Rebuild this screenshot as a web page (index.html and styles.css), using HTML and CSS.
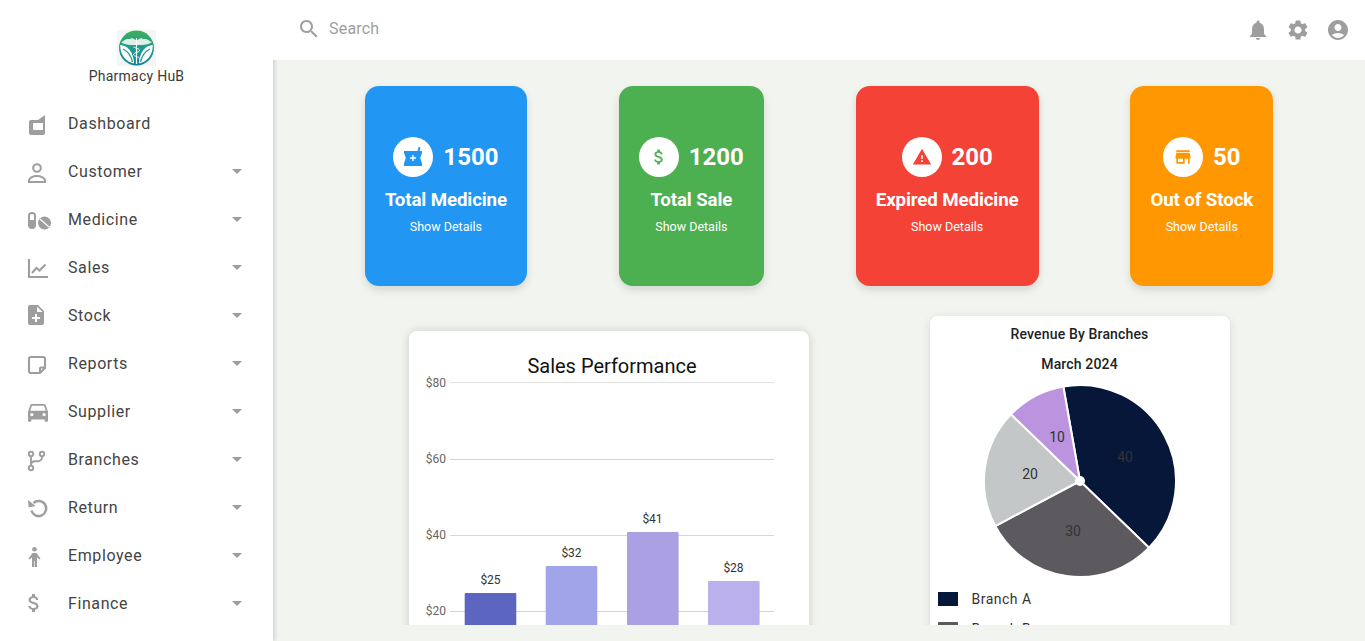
FILE: index.html
```html
<!DOCTYPE html>
<html lang="en">
<head>
<meta charset="utf-8">
<title>Pharmacy HuB</title>
<link rel="stylesheet" href="styles.css">
</head>
<body>
<aside class="sidebar">
  <div class="brand">
    <svg class="logo" viewBox="0 0 39 36">
      <defs>
        <linearGradient id="lg" x1="0" y1="0" x2="0" y2="1">
          <stop offset="0" stop-color="#3fae5a"/>
          <stop offset=".45" stop-color="#1f9f8c"/>
          <stop offset="1" stop-color="#0f7f9a"/>
        </linearGradient>
      </defs>
      <rect width="39" height="36" fill="#f3f6f5"/>
      <circle cx="19.500" cy="18" r="17.500" fill="url(#lg)"/>
      <path d="M4 12c3-.5 4-3.500 7-3 2 .3 3-1.500 5-.5l3.500 2 3.500-2c2-1 3 .8 5 .5 3-.5 4 2.500 7 3-3 2.500-7 3-15.500 3S7 14.500 4 12z" fill="#dff0ea"/>
      <path d="M3.200 15c7 .5 13 6 14 18.500C9 32 3 25 3.200 15z" fill="#fff"/>
      <path d="M35.800 15c-7 .5-13 6-14 18.500C30 32 36 25 35.800 15z" fill="#fff"/>
      <path d="M6 19c4 2 8 6 9.500 13M33 19c-4 2-8 6-9.500 13" fill="none" stroke="#1f9f8c" stroke-width="1.300"/>
      <path d="M19.500 8v26" stroke="#fff" stroke-width="1.200"/>
      <path d="M16.500 17c3 1.500 6 1.500 6 3.500s-6 2-6 4 6 2 6 4" fill="none" stroke="#fff" stroke-width="1"/>
    </svg>
    <div class="brand-name">Pharmacy HuB</div>
  </div>
  <ul class="nav">
    <li class="nav-item">
      <svg class="nav-icon" viewBox="0 0 24 24"><path fill-rule="evenodd" d="M7 9h7l7-5v18a2 2 0 0 1-2 2H7a2 2 0 0 1-2-2V11a2 2 0 0 1 2-2zm3 3a1 1 0 0 0-1 1v5a1 1 0 0 0 1 1h9v-7z"/></svg>
      <span class="nav-label">Dashboard</span>
    </li>
    <li class="nav-item">
      <svg class="nav-icon" viewBox="0 0 24 24"><circle class="line" cx="13" cy="9" r="3.800"/><path class="line" d="M5 23v-1.500C5 19 9 17 13 17s8 2 8 4.500V23z"/></svg>
      <span class="nav-label">Customer</span>
      <svg class="caret" viewBox="0 0 24 24"><path d="M7 10l5 5 5-5z"/></svg>
    </li>
    <li class="nav-item">
      <svg class="nav-icon" viewBox="0 0 24 24"><path fill-rule="evenodd" d="M8 5a4 4 0 0 1 4 4v9a4 4 0 0 1-8 0V9a4 4 0 0 1 4-4zm0 2a2 2 0 0 0-2 2v4h4V9a2 2 0 0 0-2-2z"/><circle cx="20.500" cy="16" r="6.500"/><path class="cut" d="M16 12l9 8"/></svg>
      <span class="nav-label">Medicine</span>
      <svg class="caret" viewBox="0 0 24 24"><path d="M7 10l5 5 5-5z"/></svg>
    </li>
    <li class="nav-item">
      <svg class="nav-icon" viewBox="0 0 24 24"><path class="line" d="M5 4v18h19"/><path class="line" d="M8 18l4.500-5 3 2.500 6-6"/></svg>
      <span class="nav-label">Sales</span>
      <svg class="caret" viewBox="0 0 24 24"><path d="M7 10l5 5 5-5z"/></svg>
    </li>
    <li class="nav-item">
      <svg class="nav-icon" viewBox="0 0 24 24"><path d="M14 2H6c-1.100 0-1.990.9-1.990 2L4 20c0 1.100.89 2 1.990 2H18c1.100 0 2-.9 2-2V8l-6-6zm2 14h-3v3h-2v-3H8v-2h3v-3h2v3h3v2zm-3-7V3.500L18.500 9H13z"/></svg>
      <span class="nav-label">Stock</span>
      <svg class="caret" viewBox="0 0 24 24"><path d="M7 10l5 5 5-5z"/></svg>
    </li>
    <li class="nav-item">
      <svg class="nav-icon" viewBox="0 0 24 24"><path class="line" d="M7 6h12a2 2 0 0 1 2 2v9l-5 5H7a2 2 0 0 1-2-2V8a2 2 0 0 1 2-2z"/><path class="line" d="M21 16.500h-4a1 1 0 0 0-1 1V22"/></svg>
      <span class="nav-label">Reports</span>
      <svg class="caret" viewBox="0 0 24 24"><path d="M7 10l5 5 5-5z"/></svg>
    </li>
    <li class="nav-item">
      <svg class="nav-icon" viewBox="0 0 24 24"><path transform="translate(4 5) scale(1.110) translate(-3 -5)" d="M18.920 6.010C18.720 5.420 18.160 5 17.500 5h-11c-.66 0-1.210.42-1.420 1.010L3 12v8c0 .55.45 1 1 1h1c.55 0 1-.45 1-1v-1h12v1c0 .55.45 1 1 1h1c.55 0 1-.45 1-1v-8l-2.080-5.990zM6.500 16c-.83 0-1.500-.67-1.500-1.500S5.670 13 6.500 13s1.500.67 1.500 1.500S7.330 16 6.500 16zm11 0c-.83 0-1.500-.67-1.500-1.500s.67-1.500 1.500-1.500 1.500.67 1.500 1.500-.67 1.500-1.500 1.500zM5 11l1.500-4.500h11L19 11H5z"/></svg>
      <span class="nav-label">Supplier</span>
      <svg class="caret" viewBox="0 0 24 24"><path d="M7 10l5 5 5-5z"/></svg>
    </li>
    <li class="nav-item">
      <svg class="nav-icon" viewBox="0 0 24 24"><circle class="thin" cx="7" cy="7" r="2.200"/><circle class="thin" cx="18" cy="7" r="2.200"/><circle class="thin" cx="7" cy="21" r="2.200"/><path class="thin" d="M7 9.200v9.600M18 9.200v1a4 4 0 0 1-4 4h-3a4 4 0 0 0-4 3.500"/></svg>
      <span class="nav-label">Branches</span>
      <svg class="caret" viewBox="0 0 24 24"><path d="M7 10l5 5 5-5z"/></svg>
    </li>
    <li class="nav-item">
      <svg class="nav-icon" viewBox="0 0 24 24"><path class="line thick" d="M9.500 8A7.500 7.500 0 1 1 7.400 15.500"/><path d="M4 5l.6 7.500 7-1.500z"/></svg>
      <span class="nav-label">Return</span>
      <svg class="caret" viewBox="0 0 24 24"><path d="M7 10l5 5 5-5z"/></svg>
    </li>
    <li class="nav-item">
      <svg class="nav-icon" viewBox="0 0 24 24"><circle cx="10.500" cy="6.300" r="2.300"/><path d="M8.500 10h4l4 5.500-1 1-2.500-2V24h-2.200v-6h-.6v6H8v-9.500l-2.500 2-1-1z"/></svg>
      <span class="nav-label">Employee</span>
      <svg class="caret" viewBox="0 0 24 24"><path d="M7 10l5 5 5-5z"/></svg>
    </li>
    <li class="nav-item">
      <svg class="nav-icon" viewBox="2 0 24 24"><path d="M11.800 10.900c-2.270-.59-3-1.200-3-2.150 0-1.090 1.010-1.850 2.700-1.850 1.780 0 2.440.85 2.500 2.100h2.210c-.07-1.720-1.120-3.300-3.210-3.810V3h-3v2.160c-1.940.42-3.500 1.680-3.500 3.610 0 2.310 1.910 3.460 4.700 4.130 2.500.6 3 1.480 3 2.410 0 .69-.49 1.790-2.700 1.790-2.060 0-2.870-.92-2.980-2.100h-2.200c.12 2.190 1.760 3.420 3.680 3.830V21h3v-2.150c1.950-.37 3.500-1.500 3.500-3.550 0-2.840-2.430-3.810-4.700-4.400z"/></svg>
      <span class="nav-label">Finance</span>
      <svg class="caret" viewBox="0 0 24 24"><path d="M7 10l5 5 5-5z"/></svg>
    </li>
  </ul>
</aside>

<div class="column">
  <header class="topbar">
    <svg class="top-icon search-icon" viewBox="0 0 24 24"><path d="M15.500 14h-.79l-.28-.27C15.410 12.590 16 11.110 16 9.500 16 5.910 13.090 3 9.500 3S3 5.910 3 9.500 5.910 16 9.500 16c1.610 0 3.090-.59 4.230-1.570l.27.28v.79l5 4.990L20.490 19l-4.990-5zm-6 0C7.010 14 5 11.990 5 9.500S7.010 5 9.500 5 14 7.010 14 9.500 11.990 14 9.500 14z"/></svg>
    <span class="search-text">Search</span>
    <div class="top-actions">
      <svg class="top-icon" viewBox="0 0 24 24"><path d="M12 22c1.100 0 2-.9 2-2h-4c0 1.100.89 2 2 2zm6-6v-5c0-3.070-1.640-5.640-4.500-6.320V4c0-.83-.67-1.500-1.500-1.500s-1.500.67-1.500 1.500v.68C7.630 5.360 6 7.920 6 11v5l-2 2v1h16v-1l-2-2z"/></svg>
      <svg class="top-icon" viewBox="0 0 24 24"><path d="M19.140 12.940c.04-.3.06-.61.06-.94 0-.32-.02-.64-.07-.94l2.030-1.580c.18-.14.23-.41.12-.61l-1.920-3.320c-.12-.22-.37-.29-.59-.22l-2.390.96c-.5-.38-1.030-.7-1.620-.94l-.36-2.540c-.04-.24-.24-.41-.48-.41h-3.840c-.24 0-.43.17-.47.41l-.36 2.540c-.59.24-1.130.57-1.620.94l-2.390-.96c-.22-.08-.47 0-.59.22L2.740 8.870c-.12.21-.08.47.12.61l2.030 1.580c-.05.3-.09.63-.09.94s.02.64.07.94l-2.030 1.580c-.18.14-.23.41-.12.61l1.920 3.320c.12.22.37.29.59.22l2.390-.96c.5.38 1.030.7 1.620.94l.36 2.540c.05.24.24.41.48.41h3.840c.24 0 .44-.17.47-.41l.36-2.540c.59-.24 1.130-.56 1.620-.94l2.390.96c.22.08.47 0 .59-.22l1.920-3.320c.12-.22.07-.47-.12-.61l-2.010-1.580zM12 15.600c-1.980 0-3.600-1.620-3.600-3.600s1.620-3.600 3.600-3.600 3.600 1.620 3.600 3.600-1.620 3.600-3.600 3.600z"/></svg>
      <svg class="top-icon" viewBox="0 0 24 24"><path d="M12 2C6.480 2 2 6.480 2 12s4.480 10 10 10 10-4.480 10-10S17.520 2 12 2zm0 4c1.930 0 3.500 1.570 3.500 3.500S13.930 13 12 13s-3.500-1.570-3.500-3.500S10.070 6 12 6zm0 14c-2.030 0-4.430-.82-6.140-2.880C7.550 15.800 9.680 15 12 15s4.450.8 6.140 2.120C16.430 19.180 14.030 20 12 20z"/></svg>
    </div>
  </header>

  <main class="main">
    <section class="stats">
      <article class="stat stat-blue">
        <div class="stat-head">
          <span class="stat-badge"><svg class="badge-icon" viewBox="0 0 24 24"><path fill-rule="evenodd" d="M21 6h-2.500l1-3.600-1.900-.6L16.500 6H3v2l1.800 5L3 18.500V21h18v-2.500L19.200 13 21 8zM15 13.700h-2.300V16h-1.400v-2.300H9v-1.400h2.300V10h1.400v2.300H15z"/></svg></span>
          <span class="stat-num">1500</span>
        </div>
        <h3 class="stat-title">Total Medicine</h3>
        <div class="stat-link">Show Details</div>
      </article>
      <article class="stat stat-green">
        <div class="stat-head">
          <span class="stat-badge"><svg class="badge-icon small" viewBox="0 0 24 24"><path d="M11.800 10.900c-2.270-.59-3-1.200-3-2.150 0-1.090 1.010-1.850 2.700-1.850 1.780 0 2.440.85 2.500 2.100h2.210c-.07-1.720-1.120-3.300-3.210-3.810V3h-3v2.160c-1.940.42-3.500 1.680-3.500 3.610 0 2.310 1.910 3.460 4.700 4.130 2.500.6 3 1.480 3 2.410 0 .69-.49 1.790-2.700 1.790-2.060 0-2.870-.92-2.980-2.100h-2.200c.12 2.190 1.760 3.420 3.680 3.830V21h3v-2.150c1.950-.37 3.500-1.500 3.500-3.550 0-2.840-2.430-3.810-4.700-4.400z"/></svg></span>
          <span class="stat-num">1200</span>
        </div>
        <h3 class="stat-title">Total Sale</h3>
        <div class="stat-link">Show Details</div>
      </article>
      <article class="stat stat-red">
        <div class="stat-head">
          <span class="stat-badge"><svg class="badge-icon small" viewBox="0 0 24 24"><path d="M1 21h22L12 2 1 21zm12-3h-2v-2h2v2zm0-4h-2v-4h2v4z"/></svg></span>
          <span class="stat-num">200</span>
        </div>
        <h3 class="stat-title">Expired Medicine</h3>
        <div class="stat-link">Show Details</div>
      </article>
      <article class="stat stat-orange">
        <div class="stat-head">
          <span class="stat-badge"><svg class="badge-icon small" viewBox="0 0 24 24"><path d="M20 4H4v2h16V4zm1 10v-2l-1-5H4l-1 5v2h1v6h10v-6h4v6h2v-6h1zm-9 4H6v-4h6v4z"/></svg></span>
          <span class="stat-num">50</span>
        </div>
        <h3 class="stat-title">Out of Stock</h3>
        <div class="stat-link">Show Details</div>
      </article>
    </section>

    <section class="charts">
      <article class="chart-card sales-card">
        <svg class="sales-chart" viewBox="0 0 400 400">
          <text class="chart-title" x="203" y="42">Sales Performance</text>
          <line class="grid grid-top" x1="41" x2="365" y1="51.500" y2="51.500"/>
          <line class="grid" x1="41" x2="365" y1="128.500" y2="128.500"/>
          <line class="grid" x1="41" x2="365" y1="204.500" y2="204.500"/>
          <line class="grid" x1="41" x2="365" y1="280.500" y2="280.500"/>
          <text class="axis" x="37" y="56">$80</text>
          <text class="axis" x="37" y="132">$60</text>
          <text class="axis" x="37" y="208">$40</text>
          <text class="axis" x="37" y="284">$20</text>
          <rect class="bar-a" x="55.700" y="262" width="51.600" height="138" rx="1"/>
          <rect class="bar-b" x="136.700" y="235" width="51.600" height="165" rx="1"/>
          <rect class="bar-c" x="218" y="201" width="51.600" height="199" rx="1"/>
          <rect class="bar-d" x="299" y="250" width="51.600" height="150" rx="1"/>
          <text class="value" x="81.500" y="253">$25</text>
          <text class="value" x="162.500" y="226">$32</text>
          <text class="value" x="243.500" y="192">$41</text>
          <text class="value" x="324.500" y="241">$28</text>
        </svg>
      </article>

      <article class="chart-card pie-card">
        <div class="pie-title">Revenue By Branches</div>
        <div class="pie-title pie-sub">March 2024</div>
        <svg class="pie" viewBox="0 0 300 200">
          <path class="slice slice-a" d="M150 100L133.330 5.460A96 96 0 0 1 219.050 166.690Z"/>
          <path class="slice slice-b" d="M150 100L219.050 166.690A96 96 0 0 1 65.240 145.070Z"/>
          <path class="slice slice-c" d="M150 100L65.240 145.070A96 96 0 0 1 80.950 33.310Z"/>
          <path class="slice slice-d" d="M150 100L80.950 33.310A96 96 0 0 1 133.330 5.460Z"/>
          <circle class="hub" cx="150" cy="100" r="5"/>
          <text class="pie-label" x="195" y="81">40</text>
          <text class="pie-label" x="143" y="155">30</text>
          <text class="pie-label" x="100" y="98">20</text>
          <text class="pie-label" x="127" y="61">10</text>
        </svg>
        <ul class="legend">
          <li class="legend-row"><span class="swatch swatch-a"></span>Branch A</li>
          <li class="legend-row"><span class="swatch swatch-b"></span>Branch B</li>
        </ul>
      </article>
    </section>
  </main>
</div>
</body>
</html>
```

FILE: styles.css
```css
* { box-sizing: border-box; }

html, body { height: 100%; }

body {
  margin: 0;
  display: flex;
  height: 641px;
  overflow: hidden;
  background: #f2f4f0;
  font-family: Roboto, "Liberation Sans", sans-serif;
  color: #333;
}

/* Sidebar */
.sidebar {
  flex: 0 0 273px;
  height: 641px;
  background: #fff;
  box-shadow: 2px 0 4px rgba(0, 0, 0, .14);
  z-index: 1;
  overflow: hidden;
}

.brand {
  display: flex;
  flex-direction: column;
  align-items: center;
  padding-top: 30px;
  height: 99px;
}

.logo { width: 39px; height: 36px; display: block; }

.brand-name {
  font-size: 14px;
  line-height: 20px;
  letter-spacing: .25px;
  color: #3a3a3a;
}

.nav { list-style: none; margin: 0; padding: 0; }

.nav-item {
  display: flex;
  align-items: center;
  height: 48px;
  padding: 0 24px;
}

.nav-icon {
  flex: 0 0 24px;
  width: 24px;
  height: 24px;
  fill: #9e9e9e;
  overflow: visible;
}

.nav-icon .line,
.nav-icon .thin {
  fill: none;
  stroke: #9e9e9e;
  stroke-width: 2.1;
}

.nav-icon .thin { stroke-width: 1.9; }

.nav-icon .thick { stroke-width: 2.5; }

.nav-icon .cut { fill: none; stroke: #fff; stroke-width: 1.2; }

.nav-label {
  flex: 1;
  margin-left: 20px;
  font-size: 16px;
  letter-spacing: .6px;
  color: #444;
}

.caret { width: 24px; height: 24px; fill: #9e9e9e; }

/* Top bar */
.column {
  flex: 1;
  min-width: 0;
  display: flex;
  flex-direction: column;
  height: 641px;
  padding-bottom: 16px;
}

.topbar {
  position: relative;
  z-index: 2;
  flex: 0 0 60px;
  display: flex;
  align-items: center;
  background: #fff;
  padding: 0 15px 0 24px;
}

.top-icon { width: 24px; height: 24px; fill: #9e9e9e; display: block; }

.search-icon { margin-top: -2px; }

.search-text {
  margin-left: 8px;
  margin-top: -4px;
  font-size: 16px;
  letter-spacing: .2px;
  color: #9e9e9e;
}

.top-actions { margin-left: auto; display: flex; gap: 16px; }

/* Main */
.main {
  flex: 1;
  min-height: 0;
  overflow: hidden;
  padding-top: 26px;
}

.stats {
  display: flex;
  justify-content: space-evenly;
}

.stat {
  height: 200px;
  padding: 0 20px;
  border-radius: 14px;
  color: #fff;
  display: flex;
  flex-direction: column;
  align-items: center;
  justify-content: center;
  box-shadow: 0 4px 8px rgba(0, 0, 0, .12);
}

.stat-blue { background: #2196f3; fill: #2196f3; }
.stat-green { background: #4caf50; fill: #4caf50; }
.stat-red { background: #f44336; fill: #f44336; }
.stat-orange { background: #ff9800; fill: #ff9800; }

.stat-head { display: flex; align-items: center; gap: 10px; }

.stat-badge {
  width: 40px;
  height: 40px;
  border-radius: 50%;
  background: #fff;
  display: flex;
  align-items: center;
  justify-content: center;
}

.badge-icon { width: 24px; height: 24px; display: block; }
.badge-icon.small { width: 20px; height: 20px; }

.stat-num { font-size: 24px; font-weight: 700; line-height: 40px; }

.stat-title {
  margin: 12px 0 0;
  font-size: 18.72px;
  font-weight: 700;
  letter-spacing: -.12px;
  line-height: 22px;
  white-space: nowrap;
}

.stat-link {
  margin-top: 8px;
  font-size: 12.5px;
  line-height: 16px;
  white-space: nowrap;
}

/* Charts */
.charts {
  display: flex;
  justify-content: center;
  align-items: flex-start;
  gap: 121px;
  margin-top: 30px;
}

.chart-card {
  background: #fff;
  border-radius: 8px;
  box-shadow: 0 2px 8px rgba(0, 0, 0, .12);
}

.sales-card {
  width: 400px;
  margin-top: 15px;
  box-shadow: 0 0 10px rgba(0, 0, 0, .16);
}

.sales-chart { display: block; width: 400px; height: 400px; }

.chart-title { font-size: 20px; fill: #111; text-anchor: middle; }

.grid { stroke: #d4d4d8; stroke-width: 1; }
.grid-top { stroke: #e0e0e0; }

.axis { font-size: 12px; fill: #666; text-anchor: end; }

.value { font-size: 12px; fill: #333; text-anchor: middle; }

.bar-a { fill: #5c65c0; }
.bar-b { fill: #9fa5e8; }
.bar-c { fill: #aba0e3; }
.bar-d { fill: #b9b0ec; }

.pie-card { width: 300px; padding-top: 8px; }

.pie-title {
  font-size: 14px;
  font-weight: 500;
  letter-spacing: .15px;
  line-height: 20px;
  color: #222;
  text-align: center;
}

.pie-sub { margin-top: 10px; }

.pie { display: block; width: 300px; height: 200px; margin-top: 7px; }

.slice { stroke: #fff; stroke-width: 2; }
.slice-a { fill: #06173a; }
.slice-b { fill: #5c5a5e; }
.slice-c { fill: #c4c7c8; }
.slice-d { fill: #bb93df; }

.hub { fill: #fff; }

.pie-label { font-size: 14px; fill: #333; text-anchor: middle; }

.legend {
  list-style: none;
  margin: 8px 0 0;
  padding: 0 0 0 8px;
  display: flex;
  flex-direction: column;
  gap: 10px;
}

.legend-row {
  display: flex;
  align-items: center;
  height: 20px;
  font-size: 14px;
  letter-spacing: .5px;
  color: #333;
}

.swatch { width: 20px; height: 14px; margin-right: 14px; }
.swatch-a { background: #06173a; }
.swatch-b { background: #5c5a5e; }
```
